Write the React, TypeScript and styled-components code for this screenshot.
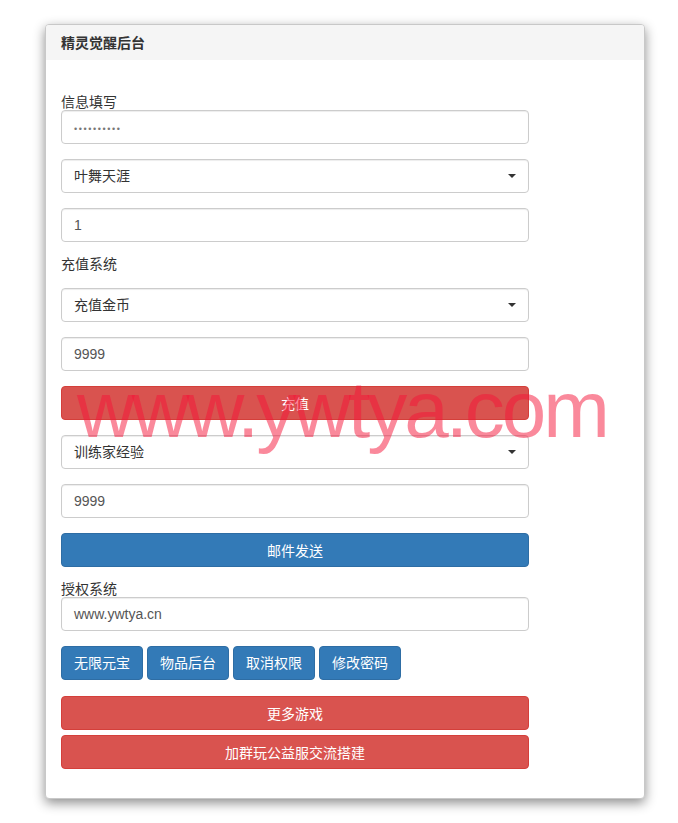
import React from "react";
import styled, { createGlobalStyle } from "styled-components";

const GlobalStyle = createGlobalStyle`
  html, body {
    margin: 0;
    padding: 0;
    background: #fff;
  }
  body {
    font-family: "Liberation Sans", "Noto Sans CJK SC", sans-serif;
    font-size: 14px;
    color: #333;
  }
`;

const App: React.FC = () => {
  return (
    <>
      <GlobalStyle />
      <Page>
        <Panel>
          <PanelHeading>精灵觉醒后台</PanelHeading>
          <PanelBody>
            <Form>
              <Label>信息填写</Label>
              <Field>
                <Dots>••••••••••</Dots>
              </Field>
              <Select gap={15}>
                叶舞天涯
                <Caret />
              </Select>
              <Field gap={15}>1</Field>
              <SectionLabel>充值系统</SectionLabel>
              <Select>
                充值金币
                <Caret />
              </Select>
              <Field gap={15}>9999</Field>
              <Button variant="danger" gap={15}>
                充值
              </Button>
              <Select gap={15}>
                训练家经验
                <Caret />
              </Select>
              <Field gap={15}>9999</Field>
              <Button variant="primary" gap={15}>
                邮件发送
              </Button>
              <Label gap={14}>授权系统</Label>
              <Field>www.ywtya.cn</Field>
              <ButtonRow>
                <SmallButton>无限元宝</SmallButton>
                <SmallButton>物品后台</SmallButton>
                <SmallButton>取消权限</SmallButton>
                <SmallButton>修改密码</SmallButton>
              </ButtonRow>
              <Button variant="danger" gap={16}>
                更多游戏
              </Button>
              <Button variant="danger" gap={5}>
                加群玩公益服交流搭建
              </Button>
            </Form>
          </PanelBody>
          <Watermark>www.ywtya.com</Watermark>
        </Panel>
      </Page>
    </>
  );
};

export default App;

const Caret: React.FC = () => (
  <CaretIcon width="8" height="4" viewBox="0 0 8 4">
    <path d="M0 0 H8 L4 4 Z" fill="#333" />
  </CaretIcon>
);

const Page = styled.div`
  padding: 24px 0 24px 45px;
`;

const Panel = styled.div`
  position: relative;
  width: 598px;
  border: 1px solid #c8c8c8;
  border-radius: 4px;
  background: #fff;
  box-shadow: 0 4px 12px rgba(0, 0, 0, 0.45);
  overflow: hidden;
`;

const PanelHeading = styled.div`
  background: #f5f5f5;
  padding: 10px 15px 9px;
  font-size: 14px;
  line-height: 16px;
  font-weight: bold;
  color: #333;
`;

const PanelBody = styled.div`
  padding: 34px 15px 29px;
`;

const Form = styled.div`
  width: 468px;
  display: flex;
  flex-direction: column;
`;

const Label = styled.div<{ gap?: number }>`
  margin-top: ${(p) => p.gap ?? 0}px;
  line-height: 16px;
  height: 16px;
  font-size: 14px;
  color: #333;
`;

const SectionLabel = styled.div`
  margin-top: 12px;
  margin-bottom: 14px;
  line-height: 20px;
  font-size: 14px;
  color: #333;
`;

const Field = styled.div<{ gap?: number }>`
  box-sizing: border-box;
  margin-top: ${(p) => p.gap ?? 0}px;
  height: 34px;
  padding: 6px 12px;
  border: 1px solid #ccc;
  border-radius: 4px;
  box-shadow: inset 0 1px 1px rgba(0, 0, 0, 0.075);
  font-size: 14px;
  line-height: 20px;
  color: #555;
  display: flex;
  align-items: center;
`;

const Select = styled(Field)`
  justify-content: space-between;
  padding-right: 12px;
  color: #333;
`;

const CaretIcon = styled.svg`
  display: block;
  margin-right: 0;
`;

const Dots = styled.span`
  font-size: 9px;
  letter-spacing: 1.6px;
  color: #777;
  padding-top: 3px;
`;

const Button = styled.div<{ variant: "danger" | "primary"; gap?: number }>`
  box-sizing: border-box;
  margin-top: ${(p) => p.gap ?? 0}px;
  height: 34px;
  border-radius: 4px;
  border: 1px solid
    ${(p) => (p.variant === "danger" ? "#d43f3a" : "#2e6da4")};
  background: ${(p) => (p.variant === "danger" ? "#d9534f" : "#337ab7")};
  color: #fff;
  font-size: 14px;
  display: flex;
  align-items: center;
  justify-content: center;
`;

const ButtonRow = styled.div`
  margin-top: 15px;
  display: flex;
  gap: 4px;
`;

const SmallButton = styled.div`
  box-sizing: border-box;
  height: 34px;
  padding: 6px 12px;
  border-radius: 4px;
  border: 1px solid #2e6da4;
  background: #337ab7;
  color: #fff;
  font-size: 14px;
  line-height: 20px;
`;

const Watermark = styled.div`
  position: absolute;
  left: 31px;
  top: 345px;
  font-family: "Liberation Sans", Arial, sans-serif;
  font-size: 80px;
  line-height: 1;
  letter-spacing: -3px;
  color: rgba(245, 20, 55, 0.5);
  pointer-events: none;
  white-space: nowrap;
`;
